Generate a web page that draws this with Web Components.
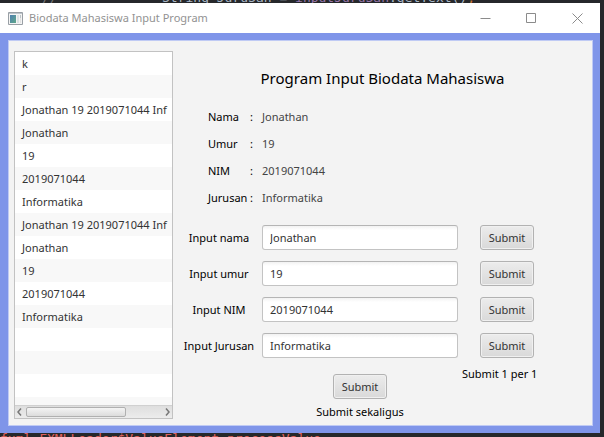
<!DOCTYPE html>
<html lang="id">
<head>
<meta charset="utf-8">
<title>Biodata Mahasiswa Input Program</title>
<style>
  html { height: 100%; }
  body { margin: 0; min-height: 100%; display: flex; background: #26282b; font-family: "Noto Sans", "Open Sans", sans-serif; font-size: 11px; line-height: 16px; color: #000; }
</style>
</head>
<body>
<biodata-app></biodata-app>
<script>
const define = (name, html, setup) => customElements.define(name, class extends HTMLElement {
  constructor() {
    super();
    this.attachShadow({ mode: "open" });
  }
  connectedCallback() {
    if (this.shadowRoot.childNodes.length) return;
    const t = document.createElement("template");
    t.innerHTML = html;
    this.shadowRoot.append(t.content.cloneNode(true));
    if (setup) setup(this, this.shadowRoot);
  }
});

define("code-strip", `<style>
  :host { display: flex; overflow: hidden; white-space: pre; font: 13px/10px "DejaVu Sans Mono", monospace; color: #a9b7c6; }
</style><slot></slot>`);

define("push-button", `<style>
  :host { display: block; width: 54px; }
  button { box-sizing: border-box; width: 100%; height: 25px; padding: 0; border: 1px solid #b2b2b2; border-radius: 3px; background: linear-gradient(#ececec, #d9d9d9); box-shadow: inset 0 0 0 1px #f0f0f0; font: inherit; color: #333; }
</style><button type="button"><slot></slot></button>`);

define("window-bar", `<style>
  :host { display: flex; align-items: center; height: 30px; padding-left: 8px; background: #fff; color: #929292; }
  .icon { width: 15px; height: 13px; }
  h1 { flex: 1; margin: 0 0 0 6px; font-size: 11px; font-weight: 400; }
  button { display: flex; align-items: center; justify-content: center; width: 46px; height: 30px; padding: 0; border: 0; background: none; }
  button svg { width: 11px; height: 11px; fill: none; stroke: #8b8b8b; }
</style>
<svg class="icon" viewBox="0 0 15 13" aria-hidden="true">
  <defs><linearGradient id="g" x2="1" y2="1"><stop stop-color="#4d7fb0"/><stop offset="1" stop-color="#5fa88a"/></linearGradient></defs>
  <path d="M.5 .5h14v12H.5z" fill="#f4f4f4" stroke="#999fa5"/><path d="M1 1.500h13" stroke="#bcc4cb"/>
  <path d="M2 3h6v8H2z" fill="url(#g)"/><path d="M9 3h2v8H9z" fill="#dce2e4"/><path d="M12 3h1v3h-1z" fill="#bcc4c8"/><path d="M12 6h1v5h-1z" fill="#e2e2e2"/>
</svg>
<h1><slot></slot></h1>
<button type="button" aria-label="Minimize"><svg viewBox="0 0 11 11"><path d="M.5 5.500h10"/></svg></button>
<button type="button" aria-label="Maximize"><svg viewBox="0 0 11 11"><path d="M.5 .5h9v9h-9z"/></svg></button>
<button type="button" aria-label="Close"><svg viewBox="0 0 11 11"><path d="M.5 .5l10 10M10.500 .5l-10 10"/></svg></button>`);

define("record-list", `<style>
  :host { display: flex; flex-direction: column; box-sizing: border-box; border: 1px solid #c2c2c2; background: #fff; overflow: hidden; color: #333; }
  ul { flex: 1 1 0; min-height: 0; margin: 0; padding: 0; list-style: none; overflow: hidden; }
  li { box-sizing: border-box; height: 23px; padding: 3px 0 0 7px; line-height: 18px; white-space: nowrap; }
  li:nth-child(even) { background: #f8f8f8; }
  .bar { display: flex; align-items: center; justify-content: space-between; height: 12px; padding: 0 2px; border-top: 1px solid #d0d0d0; background: linear-gradient(#dedede, #ececec); }
  .track { flex: 1; margin: 0 4px; }
  .thumb { box-sizing: border-box; width: 74%; height: 10px; border: 1px solid #b0b0b0; border-radius: 2px; background: linear-gradient(#f4f4f4, #dcdcdc); }
  svg { width: 5px; height: 8px; fill: none; stroke: #777; stroke-width: 1.500; }
</style>
<ul></ul>
<div class="bar">
  <svg viewBox="0 0 5 8"><path d="M4 .5L1 4l3 3.500"/></svg>
  <div class="track"><div class="thumb"></div></div>
  <svg viewBox="0 0 5 8"><path d="M1 .5L4 4 1 7.500"/></svg>
</div>`, (host, root) => {
  const items = ["k", "r", "Jonathan 19 2019071044 Inf", "Jonathan", "19", "2019071044", "Informatika",
    "Jonathan 19 2019071044 Inf", "Jonathan", "19", "2019071044", "Informatika", "", "", "", ""];
  for (const text of items) {
    const li = document.createElement("li");
    li.textContent = text;
    root.querySelector("ul").append(li);
  }
});

define("biodata-info", `<style>
  dl { display: grid; grid-template-columns: 42px 12px 1fr; row-gap: 11px; margin: 0; }
  :host { display: block; }
  dt { display: contents; }
  dd { margin: 0; color: #444; }
</style>
<dl>
  <dt><span>Nama</span><span>:</span></dt><dd>Jonathan</dd>
  <dt><span>Umur</span><span>:</span></dt><dd>19</dd>
  <dt><span>NIM</span><span>:</span></dt><dd>2019071044</dd>
  <dt><span>Jurusan</span><span>:</span></dt><dd>Informatika</dd>
</dl>`);

define("biodata-field", `<style>
  :host { display: grid; grid-template-columns: var(--form-columns); align-items: center; }
  label { padding-right: 7px; text-align: center; white-space: nowrap; }
  input { box-sizing: border-box; width: 100%; min-width: 0; height: 25px; padding: 0 7px; border: 1px solid #c3c3c3; border-top-color: #b5b5b5; border-radius: 3px; background: linear-gradient(#f2f2f2, #fff 4px); font: inherit; color: #333; }
  push-button { justify-self: center; }
</style>
<label for="value"></label><input id="value" type="text"><push-button>Submit</push-button>`, (host, root) => {
  root.querySelector("label").textContent = host.getAttribute("label");
  root.querySelector("input").value = host.getAttribute("value");
});

define("biodata-form", `<style>
  :host { display: block; box-sizing: border-box; padding: 17px 36px 0 10px; --form-columns: 79px minmax(0, 1fr) 98px; }
  h2 { margin: 0 -26px 21px 0; font-size: 15px; line-height: 20px; font-weight: 400; text-align: center; }
  biodata-info { margin: 0 0 19px 25px; }
  .fields { display: grid; gap: 11px; }
  .all { display: grid; grid-template-columns: var(--form-columns); margin-top: 9px; }
  .group { grid-column: 2; display: flex; flex-direction: column; align-items: center; gap: 6px; margin-top: 7px; }
  .each { padding-left: 4px; white-space: nowrap; }
  p { margin: 0; line-height: 14px; }
</style>
<h2>Program Input Biodata Mahasiswa</h2>
<biodata-info></biodata-info>
<div class="fields">
  <biodata-field label="Input nama" value="Jonathan"></biodata-field>
  <biodata-field label="Input umur" value="19"></biodata-field>
  <biodata-field label="Input NIM" value="2019071044"></biodata-field>
  <biodata-field label="Input Jurusan" value="Informatika"></biodata-field>
</div>
<div class="all">
  <div class="group"><push-button>Submit</push-button><p>Submit sekaligus</p></div>
  <p class="each">Submit 1 per 1</p>
</div>`);

define("biodata-app", `<style>
  :host { flex: 1; display: flex; flex-direction: column; min-width: 0; }
  .top { height: 3px; align-items: flex-end; }
  .top span { flex: none; }
  .comment { width: 120px; padding-left: 42px; color: #777; }
  .field { color: #9876aa; }
  .end { color: #cc7832; }
  .bottom { height: 4px; line-height: 12px; color: #e0605c; }
  main { flex: 1; display: flex; flex-direction: column; margin-right: 4px; }
  .frame { flex: 1; display: flex; background: #7f95e9; padding: 7px 7px 7px 8px; }
  .panel { flex: 1; display: grid; grid-template-columns: 159px minmax(0, 1fr); min-width: 0; border: 1px solid #bfcaf4; background: #f3f3f3; padding: 10px 0 6px 5px; }
</style>
<code-strip class="top"><span class="comment">//</span><span>String JuruSan = </span><span class="field">inputJuruSan</span><span>.getText()</span><span class="end">;</span></code-strip>
<main>
  <window-bar>Biodata Mahasiswa Input Program</window-bar>
  <div class="frame"><div class="panel"><record-list></record-list><biodata-form></biodata-form></div></div>
</main>
<code-strip class="bottom">fxml.FXMLLoader$ValueElement.processValue</code-strip>`);
</script>
</body>
</html>
